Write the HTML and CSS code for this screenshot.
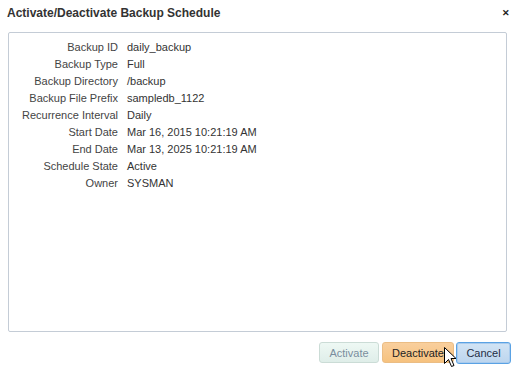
FILE: index.html
```html
<!DOCTYPE html>
<html>
<head>
<meta charset="utf-8">
<link rel="stylesheet" href="styles.css">
</head>
<body>
<div class="dialog">
  <div class="header">
    <span class="title">Activate/Deactivate Backup Schedule</span>
    <span class="close">&#x2715;</span>
  </div>
  <div class="panel">
    <div class="form">
      <div class="label">Backup ID</div><div class="value">daily_backup</div>
      <div class="label">Backup Type</div><div class="value">Full</div>
      <div class="label">Backup Directory</div><div class="value">/backup</div>
      <div class="label">Backup File Prefix</div><div class="value">sampledb_1122</div>
      <div class="label">Recurrence Interval</div><div class="value">Daily</div>
      <div class="label">Start Date</div><div class="value">Mar 16, 2015 10:21:19 AM</div>
      <div class="label">End Date</div><div class="value">Mar 13, 2025 10:21:19 AM</div>
      <div class="label">Schedule State</div><div class="value">Active</div>
      <div class="label">Owner</div><div class="value">SYSMAN</div>
    </div>
  </div>
  <div class="footer">
    <button class="btn btn-activate" disabled>Activate</button>
    <button class="btn btn-deactivate">Deactivate</button>
    <button class="btn btn-cancel">Cancel</button>
  </div>
  <svg class="cursor" width="13" height="21" viewBox="0 0 13 21">
    <path d="M0.5 0.5 L0.5 16.5 L4.5 12.5 L7.5 19.5 L10 18.5 L7 11.5 L12 11.5 Z" fill="#fff" stroke="#000" stroke-width="1" stroke-linejoin="miter"/>
  </svg>
</div>
</body>
</html>
```
FILE: styles.css
```css
html, body {
  margin: 0;
  padding: 0;
  background: #fff;
}
body {
  width: 516px;
  height: 368px;
  overflow: hidden;
  font-family: "Liberation Sans", Arial, sans-serif;
  font-size: 11px;
  color: #333;
}
.dialog {
  position: relative;
  width: 516px;
  height: 368px;
}
.header {
  height: 26px;
  margin-bottom: 6px;
  display: flex;
  align-items: center;
  justify-content: space-between;
  padding: 0 6px 0 7px;
}
.title {
  font-weight: bold;
  font-size: 12px;
  color: #333;
}
.close {
  font-size: 9px;
  font-weight: bold;
  color: #222;
}
.panel {
  margin-left: 8px;
  width: 497px;
  height: 298px;
  border: 1px solid #c4ccd6;
  border-radius: 2px;
  box-sizing: content-box;
}
.form {
  display: grid;
  grid-template-columns: 109px auto;
  column-gap: 9px;
  padding-top: 6px;
  line-height: 17px;
}
.label {
  text-align: right;
  color: #444;
}
.value {
  color: #333;
}
.footer {
  display: flex;
  justify-content: flex-end;
  margin-top: 10px;
  padding-right: 5px;
  height: 22px;
}
.btn {
  font-family: "Liberation Sans", Arial, sans-serif;
  font-size: 11px;
  height: 21px;
  border-radius: 3px;
  padding: 0;
  margin: 0;
}
.btn-activate {
  width: 60px;
  margin-right: 3px;
  background: linear-gradient(#eef8f4, #dfeee9);
  border: 1px solid #cbdcd6;
  color: #7a8e9e;
}
.btn-deactivate {
  width: 72px;
  margin-right: 2px;
  background: linear-gradient(#f9cf9d, #f6c27e);
  border: 1px solid #ebbd84;
  color: #222;
}
.btn-cancel {
  width: 55px;
  height: 22px;
  background: linear-gradient(#d2e4f5, #bcd5ee);
  border: 1px solid #5aa2e4;
  box-shadow: inset 0 0 0 1px #a9cbed;
  color: #1f2d45;
}
.cursor {
  position: absolute;
  left: 444px;
  top: 347px;
}
```
